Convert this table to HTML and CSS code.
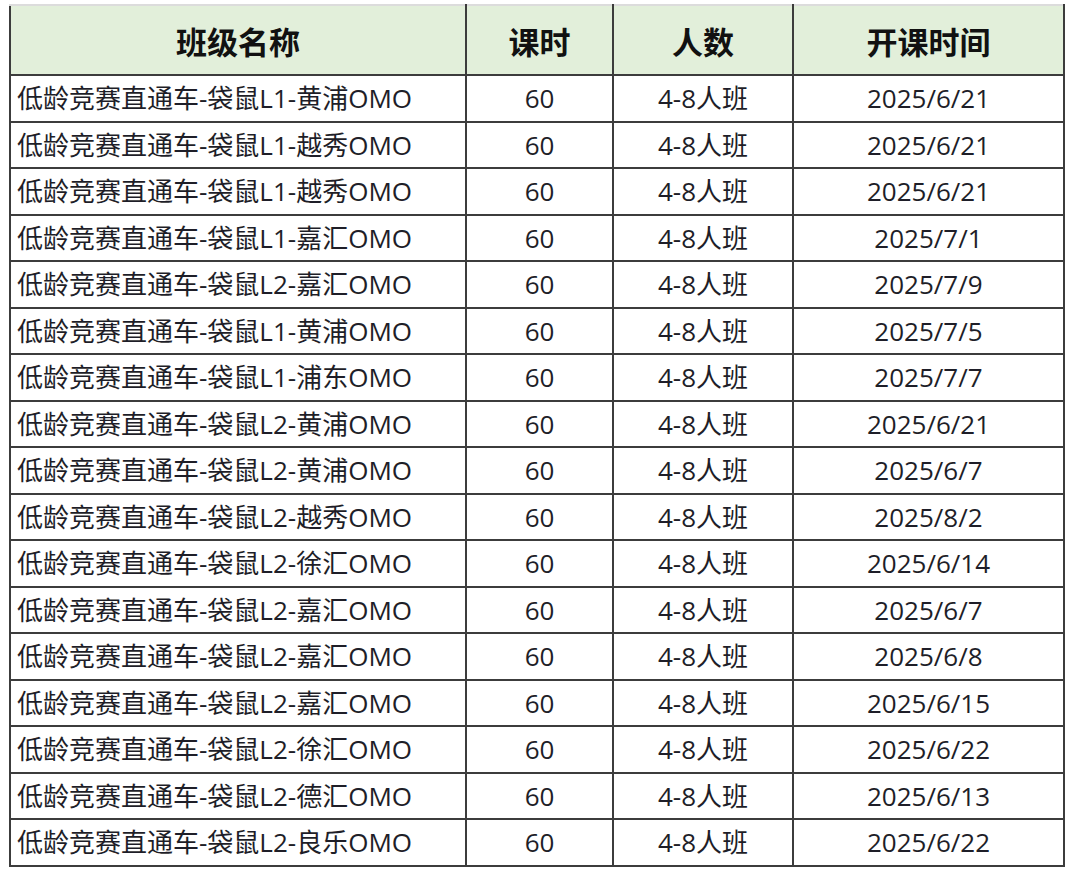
FILE: index.html
```html
<!DOCTYPE html>
<html lang="zh-CN">
<head>
<meta charset="utf-8">
<title>班级列表</title>
<link rel="stylesheet" href="styles.css">
</head>
<body>
<table class="sheet">
  <colgroup>
    <col class="c-name"><col class="c-hours"><col class="c-size"><col class="c-date">
  </colgroup>
  <thead>
    <tr><th>班级名称</th><th>课时</th><th>人数</th><th>开课时间</th></tr>
  </thead>
  <tbody>
    <tr><td class="name">低龄竞赛直通车-袋鼠L1-黄浦OMO</td><td>60</td><td>4-8人班</td><td>2025/6/21</td></tr>
    <tr><td class="name">低龄竞赛直通车-袋鼠L1-越秀OMO</td><td>60</td><td>4-8人班</td><td>2025/6/21</td></tr>
    <tr><td class="name">低龄竞赛直通车-袋鼠L1-越秀OMO</td><td>60</td><td>4-8人班</td><td>2025/6/21</td></tr>
    <tr><td class="name">低龄竞赛直通车-袋鼠L1-嘉汇OMO</td><td>60</td><td>4-8人班</td><td>2025/7/1</td></tr>
    <tr><td class="name">低龄竞赛直通车-袋鼠L2-嘉汇OMO</td><td>60</td><td>4-8人班</td><td>2025/7/9</td></tr>
    <tr><td class="name">低龄竞赛直通车-袋鼠L1-黄浦OMO</td><td>60</td><td>4-8人班</td><td>2025/7/5</td></tr>
    <tr><td class="name">低龄竞赛直通车-袋鼠L1-浦东OMO</td><td>60</td><td>4-8人班</td><td>2025/7/7</td></tr>
    <tr><td class="name">低龄竞赛直通车-袋鼠L2-黄浦OMO</td><td>60</td><td>4-8人班</td><td>2025/6/21</td></tr>
    <tr><td class="name">低龄竞赛直通车-袋鼠L2-黄浦OMO</td><td>60</td><td>4-8人班</td><td>2025/6/7</td></tr>
    <tr><td class="name">低龄竞赛直通车-袋鼠L2-越秀OMO</td><td>60</td><td>4-8人班</td><td>2025/8/2</td></tr>
    <tr><td class="name">低龄竞赛直通车-袋鼠L2-徐汇OMO</td><td>60</td><td>4-8人班</td><td>2025/6/14</td></tr>
    <tr><td class="name">低龄竞赛直通车-袋鼠L2-嘉汇OMO</td><td>60</td><td>4-8人班</td><td>2025/6/7</td></tr>
    <tr><td class="name">低龄竞赛直通车-袋鼠L2-嘉汇OMO</td><td>60</td><td>4-8人班</td><td>2025/6/8</td></tr>
    <tr><td class="name">低龄竞赛直通车-袋鼠L2-嘉汇OMO</td><td>60</td><td>4-8人班</td><td>2025/6/15</td></tr>
    <tr><td class="name">低龄竞赛直通车-袋鼠L2-徐汇OMO</td><td>60</td><td>4-8人班</td><td>2025/6/22</td></tr>
    <tr><td class="name">低龄竞赛直通车-袋鼠L2-德汇OMO</td><td>60</td><td>4-8人班</td><td>2025/6/13</td></tr>
    <tr><td class="name">低龄竞赛直通车-袋鼠L2-良乐OMO</td><td>60</td><td>4-8人班</td><td>2025/6/22</td></tr>
  </tbody>
</table>
</body>
</html>
```
FILE: styles.css
```css
html, body {
  margin: 0;
  padding: 0;
  background: #ffffff;
}
body {
  padding: 4px 0 0 9px;
  font-family: "Open Sans", "Noto Sans CJK SC", sans-serif;
  color: #1e1e28;
}
.sheet {
  border-collapse: collapse;
  table-layout: fixed;
  width: 1054px;
}
.c-name { width: 456px; }
.c-hours { width: 147px; }
.c-size { width: 180px; }
.c-date { width: 271px; }

.sheet th, .sheet td {
  border: 2px solid #3c3c3c;
  text-align: center;
  padding: 0;
  white-space: nowrap;
  overflow: hidden;
}
.sheet th {
  height: 68px;
  background: #e2efda;
  font-family: "Noto Sans CJK SC", sans-serif;
  font-weight: 700;
  font-size: 31px;
  color: #111111;
  border-top: 2px solid #dcdcdc;
}
.sheet td {
  height: 44.5px;
  font-size: 26px;
  line-height: 1;
}
.sheet td.name {
  text-align: left;
  padding-left: 6px;
}
```
